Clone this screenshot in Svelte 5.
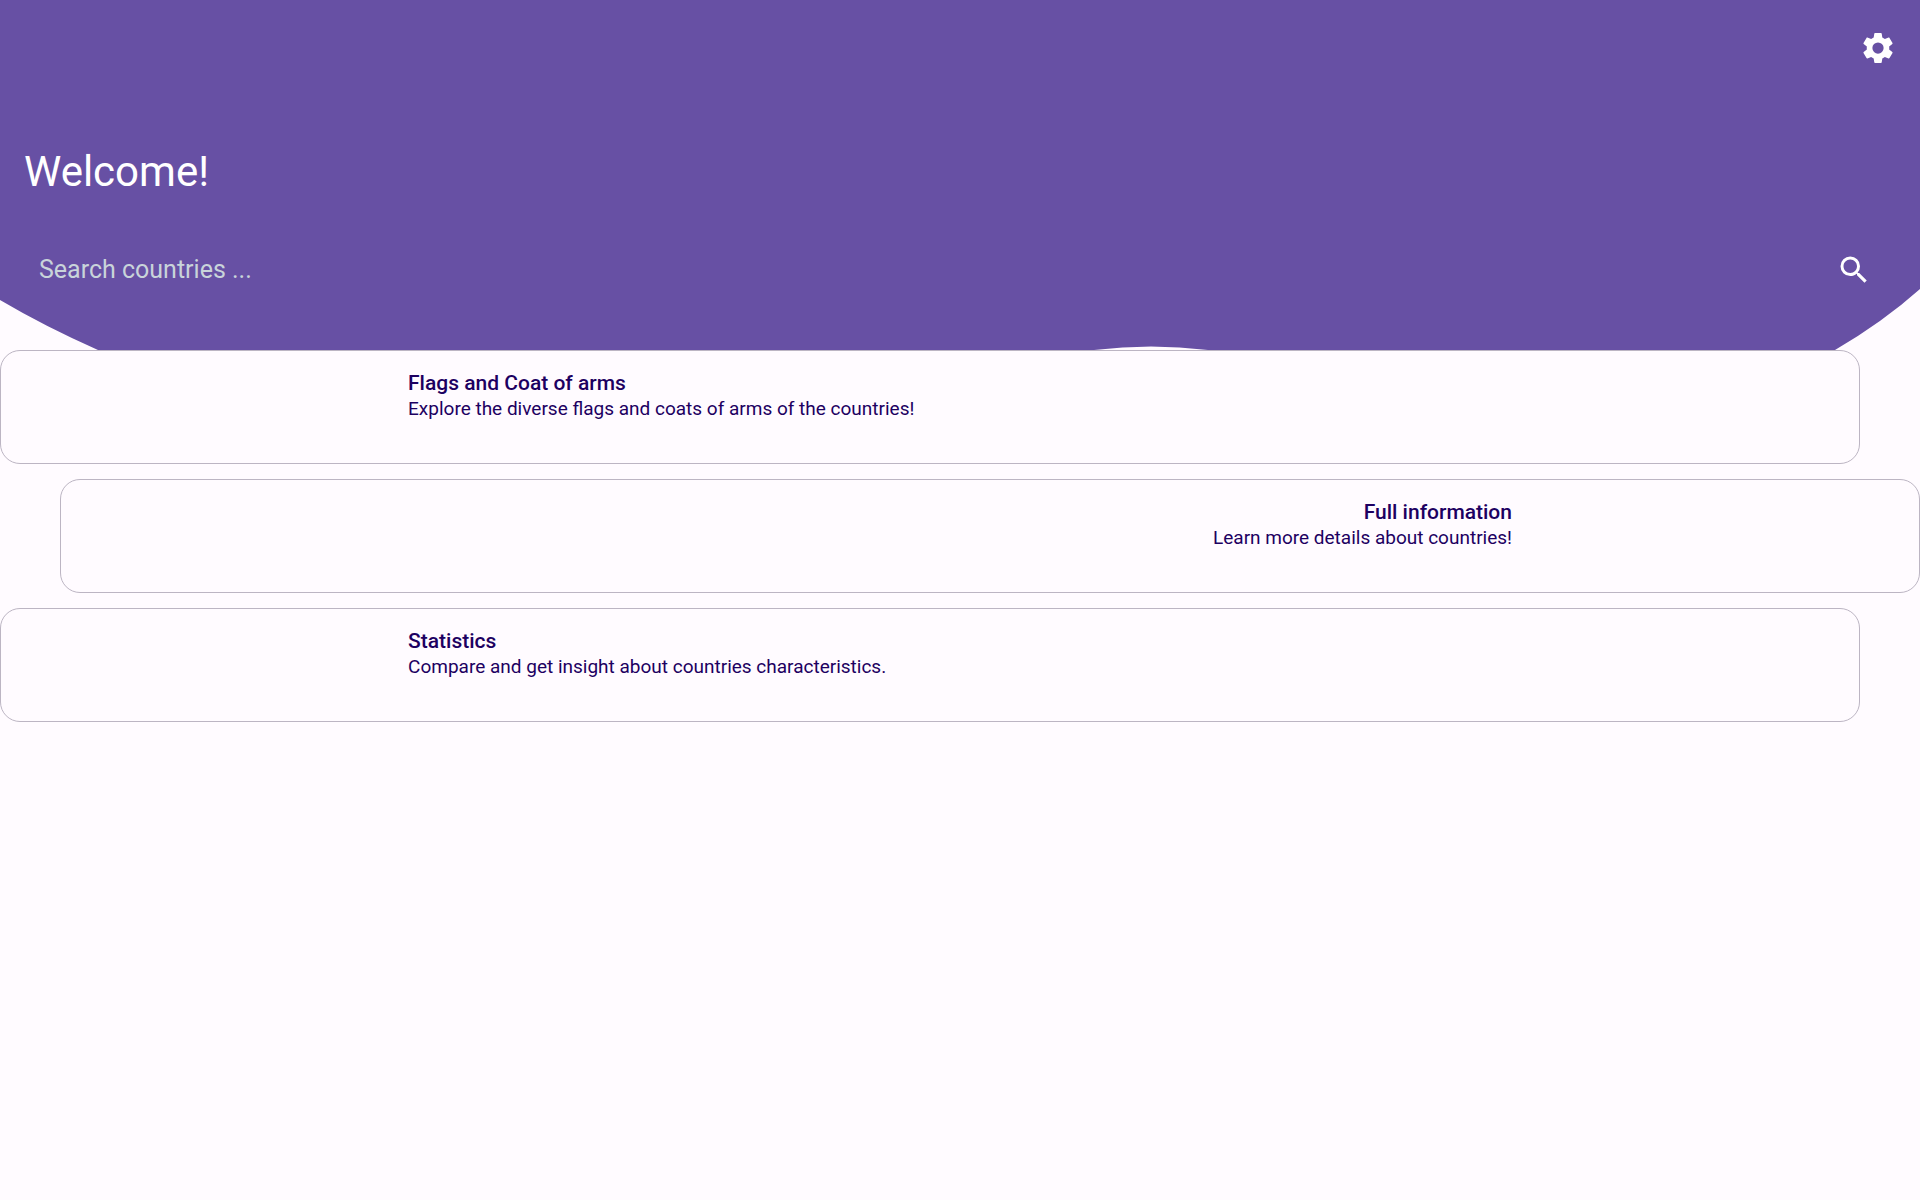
<script>
  const cards = [
    { title: 'Flags and Coat of arms', text: 'Explore the diverse flags and coats of arms of the countries!', side: 'start' },
    { title: 'Full information', text: 'Learn more details about countries!', side: 'end' },
    { title: 'Statistics', text: 'Compare and get insight about countries characteristics.', side: 'start' }
  ];
  let query = $state('');
</script>

<header class="hero">
  <svg class="wave" viewBox="0 0 1920 350" preserveAspectRatio="none" aria-hidden="true">
    <path d="M0 0H1920V289Q1883 322 1835 350H1208Q1151 343 1094 350H98Q44 326 0 300Z" />
  </svg>
  <div class="toolbar">
    <button class="icon-button" type="button" aria-label="Settings">
      <svg viewBox="0 0 24 24" aria-hidden="true">
        <path d="M19.43 12.98c.04-.32.07-.64.07-.98s-.03-.66-.07-.98l2.11-1.65c.19-.15.24-.42.12-.64l-2-3.46c-.12-.22-.39-.3-.61-.22l-2.49 1c-.52-.4-1.08-.73-1.69-.98l-.38-2.65C14.46 2.18 14.25 2 14 2h-4c-.25 0-.46.18-.49.42l-.38 2.65c-.61.25-1.17.59-1.69.98l-2.49-1c-.23-.09-.49 0-.61.22l-2 3.46c-.13.22-.07.49.12.64l2.11 1.65c-.04.32-.07.65-.07.98s.03.66.07.98l-2.11 1.65c-.19.15-.24.42-.12.64l2 3.46c.12.22.39.3.61.22l2.49-1c.52.4 1.08.73 1.69.98l.38 2.65c.03.24.24.42.49.42h4c.25 0 .46-.18.49-.42l.38-2.65c.61-.25 1.17-.59 1.69-.98l2.49 1c.23.09.49 0 .61-.22l2-3.46c.12-.22.07-.49-.12-.64l-2.11-1.65zM12 15.75a3.75 3.75 0 1 1 0-7.5 3.75 3.75 0 0 1 0 7.5z" fill-rule="evenodd" />
      </svg>
    </button>
  </div>
  <h1>Welcome!</h1>
  <form class="search" onsubmit={(e) => e.preventDefault()}>
    <input type="text" aria-label="Search countries" placeholder="Search countries ..." bind:value={query} />
    <button class="icon-button" type="submit" aria-label="Search">
      <svg viewBox="0 0 24 24" aria-hidden="true">
        <path d="M15.5 14h-.79l-.28-.27A6.47 6.47 0 0 0 16 9.5 6.5 6.5 0 1 0 9.5 16c1.61 0 3.09-.59 4.23-1.57l.27.28v.79l5 4.99L20.49 19l-4.99-5zm-6 0C7.01 14 5 11.99 5 9.5S7.01 5 9.5 5 14 7.01 14 9.5 11.99 14 9.5 14z" />
      </svg>
    </button>
  </form>
</header>

<main class="cards">
  {#each cards as card}
    <button type="button" class="card {card.side}">
      <span class="title">{card.title}</span>
      <span class="text">{card.text}</span>
    </button>
  {/each}
</main>

<style>
  :global(body) {
    margin: 0;
    background: #fffbff;
    font-family: Roboto, sans-serif;
  }
  .hero {
    position: relative;
    box-sizing: border-box;
    min-height: 350px;
    padding: 16px 24px 48px;
    color: #fff;
  }
  .wave {
    position: absolute;
    inset: 0;
    z-index: -1;
    width: 100%;
    height: 100%;
    fill: #6750a4;
  }
  .toolbar {
    display: flex;
    justify-content: flex-end;
    margin-right: -14px;
  }
  .icon-button {
    display: flex;
    align-items: center;
    justify-content: center;
    width: 64px;
    height: 64px;
    padding: 0;
    border: 0;
    background: none;
    color: #fff;
    cursor: pointer;
  }
  .icon-button svg {
    width: 36px;
    height: 36px;
    fill: currentColor;
  }
  h1 {
    margin: 64px 0 38px;
    font-size: 42px;
    line-height: 56px;
    font-weight: 400;
  }
  .search {
    display: flex;
    align-items: center;
    padding: 0 10px 0 15px;
  }
  .search input {
    flex: 1;
    min-width: 0;
    padding: 0;
    border: 0;
    outline: 0;
    background: none;
    color: #fff;
    font: 25px/32px Roboto, sans-serif;
  }
  .search input::placeholder {
    color: #c9d4da;
    opacity: 1;
  }
  .cards {
    display: flex;
    flex-direction: column;
    gap: 15px;
  }
  .card {
    display: flex;
    flex-direction: column;
    min-height: 114px;
    padding: 19px 21.2%;
    border: 1px solid #bcb5c3;
    border-radius: 20px;
    background: #fffbff;
    color: #1d0061;
    font-family: inherit;
    text-align: start;
    cursor: pointer;
  }
  .card.start {
    margin-right: 60px;
  }
  .card.end {
    margin-left: 60px;
    align-items: flex-end;
    text-align: end;
  }
  .title {
    font-size: 21px;
    line-height: 26px;
    font-weight: 500;
  }
  .text {
    font-size: 19px;
    line-height: 26px;
  }
</style>
